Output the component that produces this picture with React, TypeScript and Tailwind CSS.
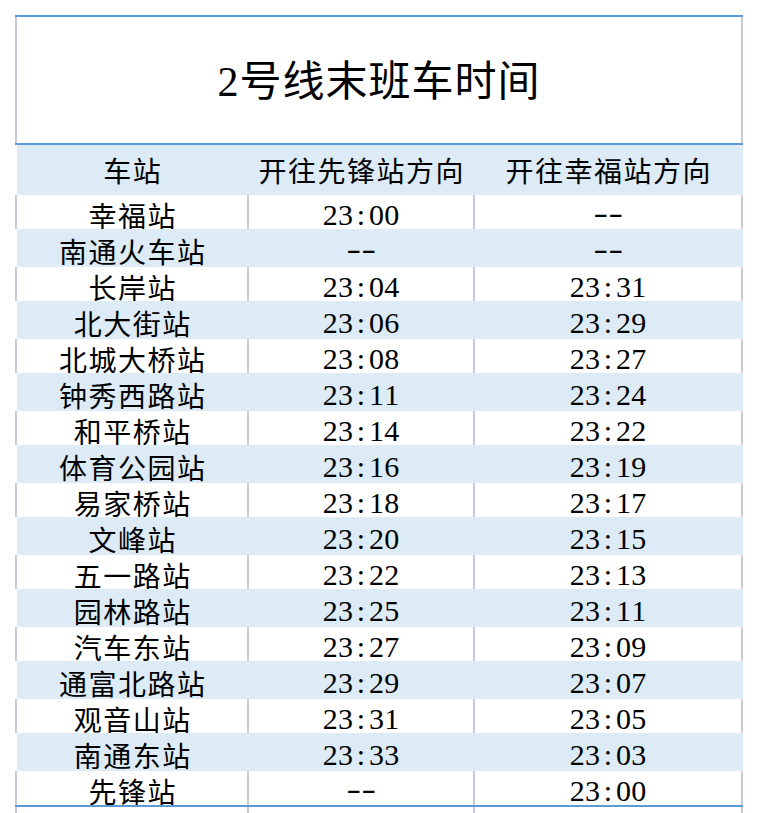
import React from "react";

const rows: [string, string, string][] = [
  ["幸福站", "23:00", "--"],
  ["南通火车站", "--", "--"],
  ["长岸站", "23:04", "23:31"],
  ["北大街站", "23:06", "23:29"],
  ["北城大桥站", "23:08", "23:27"],
  ["钟秀西路站", "23:11", "23:24"],
  ["和平桥站", "23:14", "23:22"],
  ["体育公园站", "23:16", "23:19"],
  ["易家桥站", "23:18", "23:17"],
  ["文峰站", "23:20", "23:15"],
  ["五一路站", "23:22", "23:13"],
  ["园林路站", "23:25", "23:11"],
  ["汽车东站", "23:27", "23:09"],
  ["通富北路站", "23:29", "23:07"],
  ["观音山站", "23:31", "23:05"],
  ["南通东站", "23:33", "23:03"],
  ["先锋站", "--", "23:00"],
];

function Time({ v }: { v: string }) {
  return (
    <span className="inline-flex text-[30px] leading-none font-['Liberation_Serif',serif]">
      {v.split("").map((c, i) => (
        <span
          key={i}
          className={
            c === "-"
              ? "inline-block w-[15.4px] text-center scale-x-[1.45] -translate-y-[2px]"
              : "inline-block w-[15.4px] text-center"
          }
        >
          {c}
        </span>
      ))}
    </span>
  );
}

function Name({ v }: { v: string }) {
  return (
    <span className="text-[28px] leading-none tracking-[1.5px] pl-[1.5px] font-['Noto_Sans_CJK_SC',sans-serif]">
      {v}
    </span>
  );
}

function WhiteRow({ r }: { r: [string, string, string] }) {
  return (
    <div className="flex h-[34px]">
      <div className="w-[232px] border-l-2 border-[#c5cbdd] flex items-center justify-center pt-[5px]">
        <Name v={r[0]} />
      </div>
      <div className="w-[226px] border-l-2 border-[#c5cbdd] flex items-center justify-center pt-[5px]">
        <Time v={r[1]} />
      </div>
      <div className="w-[270px] border-x-2 border-[#c5cbdd] flex items-center justify-center pt-[5px]">
        <Time v={r[2]} />
      </div>
    </div>
  );
}

function BlueRow({ r }: { r: [string, string, string] }) {
  return (
    <div className="flex h-[38px] ml-[2px] w-[726px] bg-[#ddebf7]">
      <div className="w-[230px] flex items-center justify-center pt-[5px]">
        <Name v={r[0]} />
      </div>
      <div className="w-[226px] pl-[2px] flex items-center justify-center pt-[5px]">
        <Time v={r[1]} />
      </div>
      <div className="w-[270px] px-[2px] flex items-center justify-center pt-[5px]">
        <Time v={r[2]} />
      </div>
    </div>
  );
}

export default function App() {
  return (
    <div className="w-[758px] h-[813px] overflow-hidden bg-white pt-[15px] pl-[15px] text-black">
      <div className="w-[728px] flex flex-col">
        <div className="h-[2px] bg-[#5b9bd5]" />
        <div className="h-[126px] border-x-2 border-[#c5cbdd] flex items-center justify-center pt-[4px]">
          <span className="text-[42px] leading-none tracking-[1px] font-['Liberation_Serif','Noto_Sans_CJK_SC',serif]">
            2号线末班车时间
          </span>
        </div>
        <div className="h-[2px] bg-[#5b9bd5]" />
        <div className="flex h-[50px] ml-[2px] w-[726px] bg-[#ddebf7]">
          <div className="w-[230px] flex items-center justify-center">
            <Name v="车站" />
          </div>
          <div className="w-[226px] pl-[2px] flex items-center justify-center">
            <Name v="开往先锋站方向" />
          </div>
          <div className="w-[270px] px-[2px] flex items-center justify-center">
            <Name v="开往幸福站方向" />
          </div>
        </div>
        {rows.map((r, i) =>
          i % 2 === 0 ? <WhiteRow key={i} r={r} /> : <BlueRow key={i} r={r} />
        )}
        <div className="h-[2px] bg-[#5b9bd5]" />
        <div className="flex h-[10px]">
          <div className="w-[232px] border-l-2 border-[#c5cbdd]" />
          <div className="w-[226px] border-l-2 border-[#c5cbdd]" />
          <div className="w-[270px] border-x-2 border-[#c5cbdd]" />
        </div>
      </div>
    </div>
  );
}
